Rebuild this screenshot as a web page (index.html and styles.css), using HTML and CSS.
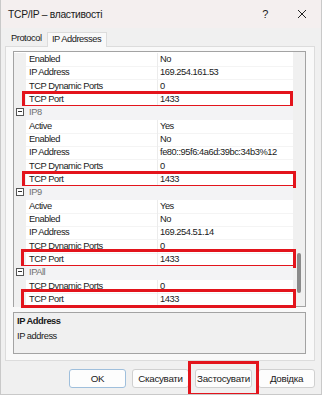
FILE: index.html
```html
<!DOCTYPE html>
<html lang="uk">
<head>
    <meta charset="UTF-8">
    <title>TCP/IP – властивості</title>
    <link rel="stylesheet" href="styles.css">
</head>
<body>
<div class="window">
    <div class="titlebar">
        <span class="title">TCP/IP – властивості</span>
        <span class="help">?</span>
        <svg class="close" width="10" height="10" viewBox="0 0 10 10"><path d="M1 1L9 9M9 1L1 9" stroke="#222" stroke-width="1"/></svg>
    </div>

    <!-- Tabs -->
    <div class="tabs">
        <div class="tab">Protocol</div>
        <div class="tab active">IP Addresses</div>
    </div>

    <div class="panel">
        <div class="grid">
            <div class="rows">
                <div class="row"><span></span><span class="name">Enabled</span><span class="val">No</span></div>
                <div class="row"><span></span><span class="name">IP Address</span><span class="val">169.254.161.53</span></div>
                <div class="row"><span></span><span class="name">TCP Dynamic Ports</span><span class="val">0</span></div>
                <div class="row hl"><span></span><span class="name">TCP Port</span><span class="val">1433</span></div>

                <div class="row cat"><span class="toggle"></span><span class="name">IP8</span></div>
                <div class="row"><span></span><span class="name">Active</span><span class="val">Yes</span></div>
                <div class="row"><span></span><span class="name">Enabled</span><span class="val">No</span></div>
                <div class="row"><span></span><span class="name">IP Address</span><span class="val">fe80::95f6:4a6d:39bc:34b3%12</span></div>
                <div class="row"><span></span><span class="name">TCP Dynamic Ports</span><span class="val">0</span></div>
                <div class="row hl wide"><span></span><span class="name">TCP Port</span><span class="val">1433</span></div>

                <div class="row cat"><span class="toggle"></span><span class="name">IP9</span></div>
                <div class="row"><span></span><span class="name">Active</span><span class="val">Yes</span></div>
                <div class="row"><span></span><span class="name">Enabled</span><span class="val">No</span></div>
                <div class="row"><span></span><span class="name">IP Address</span><span class="val">169.254.51.14</span></div>
                <div class="row"><span></span><span class="name">TCP Dynamic Ports</span><span class="val">0</span></div>
                <div class="row hl tall"><span></span><span class="name">TCP Port</span><span class="val">1433</span></div>

                <div class="row cat"><span class="toggle"></span><span class="name">IPAll</span></div>
                <div class="row"><span></span><span class="name">TCP Dynamic Ports</span><span class="val">0</span></div>
                <div class="row hl tall"><span></span><span class="name">TCP Port</span><span class="val">1433</span></div>
            </div>
            <div class="scroll"><div class="thumb"></div></div>
        </div>

        <div class="desc">
            <div class="desc-title">IP Address</div>
            <div class="desc-text">IP address</div>
        </div>
    </div>

    <div class="buttons">
        <button class="btn default">OK</button>
        <button class="btn">Скасувати</button>
        <span class="mark"><button class="btn">Застосувати</button></span>
        <button class="btn">Довідка</button>
    </div>
</div>
</body>
</html>
```

FILE: styles.css
```css
/* Base */
body {
    margin: 0;
    font-family: "Liberation Sans", Arial, sans-serif;
    font-size: 9.3px;
    letter-spacing: -0.45px;
    color: #1a1a1a;
}
.window {
    width: 322px;
    height: 395px;
    box-sizing: border-box;
    background-color: #f0f0f0;
    border: 1px solid #c9c9c9;
    border-top: none;
    overflow: hidden;
}

/* Title bar */
.titlebar {
    height: 28px;
    background-color: #f4efef;
    display: flex;
    align-items: center;
    padding-left: 7px;
}
.title {
    flex: 1;
    font-size: 10.3px;
    letter-spacing: -0.3px;
}
.help {
    font-size: 11px;
    margin-right: 29px;
}
.close {
    margin-right: 14px;
}

/* Tabs */
.tabs {
    display: flex;
    height: 18px;
    align-items: flex-end;
    padding-left: 5px;
}
.tab {
    height: 15px;
    line-height: 14px;
    padding: 0 5px;
}
.tab.active {
    box-sizing: border-box;
    width: 60px;
    text-align: center;
    background-color: #f9f9f9;
    border: 1px solid #dcdcdc;
    border-bottom: none;
    line-height: 12px;
    margin-bottom: -1px;
    position: relative;
    padding: 0;
}
.panel {
    box-sizing: border-box;
    margin: 0 6px 0 4px;
    height: 315px;
    background-color: #f9f9f9;
    border: 1px solid #dcdcdc;
    padding: 4px 8px 0 7px;
}

/* Property grid */
.grid {
    display: flex;
    height: 254px;
    border: 1px solid #a3a3a3;
    background-color: #ffffff;
}
.rows {
    flex: 1;
    padding-top: 1px;
}
.row {
    position: relative;
    display: grid;
    grid-template-columns: 12px 132px 1fr;
    height: 13.33px;
    line-height: 13px;
}
.row > span:first-child {
    background-color: #f0f0f0;
}
.row .name {
    padding-left: 3px;
    border-bottom: 1px solid #f4f4f4;
    border-right: 1px solid #ececec;
    white-space: nowrap;
}
.row .val {
    padding-left: 2px;
    border-bottom: 1px solid #f4f4f4;
    white-space: nowrap;
}
.row.cat {
    background-color: #f3f3f5;
    color: #707070;
}
.row.cat .name {
    border: none;
    grid-column: 2 / 4;
}
.toggle {
    position: relative;
}
.toggle::before {
    content: "";
    position: absolute;
    left: 2px;
    top: 2px;
    width: 6px;
    height: 6px;
    border: 1px solid #555555;
    background-color: #ffffff;
}
.toggle::after {
    content: "";
    position: absolute;
    left: 4px;
    top: 5px;
    width: 4px;
    height: 1px;
    background-color: #333333;
}

/* Red marks drawn over the rows */
.row.hl::after {
    content: "";
    position: absolute;
    top: -2px;
    bottom: -2px;
    left: 8px;
    right: 0;
    border: 3px solid #e3141c;
}
.row.wide::after {
    right: -3px;
}
.row.tall::after {
    top: -4px;
    left: 7px;
    right: -3px;
}

.scroll {
    width: 12px;
    background-color: #f0f0f0;
}
.thumb {
    width: 4px;
    height: 40px;
    margin: 201px 0 0 4px;
    border-radius: 2px;
    background-color: #8a8a8a;
}

/* Description */
.desc {
    box-sizing: border-box;
    margin-top: 5px;
    height: 42px;
    border: 1px solid #a3a3a3;
    background-color: #f0f0f0;
    padding: 2px 0 0 3px;
}
.desc-title {
    font-weight: bold;
    line-height: 13px;
}
.desc-text {
    margin-top: 2px;
    line-height: 12px;
}

/* Buttons */
.buttons {
    display: flex;
    justify-content: flex-end;
    align-items: center;
    gap: 6px;
    padding: 8px 6px 0 0;
}
.btn {
    font-family: inherit;
    font-size: 9.8px;
    letter-spacing: -0.3px;
    color: #1a1a1a;
    width: 57px;
    height: 19px;
    padding: 0;
    background-color: #fdfdfd;
    border: 1px solid #d0d0d0;
    border-radius: 3px;
}
.btn.default {
    border-color: #9fbfdc;
}
.mark {
    position: relative;
    display: flex;
}
.mark::after {
    content: "";
    position: absolute;
    top: -8px;
    bottom: -8px;
    left: -7px;
    right: -7px;
    border: 3px solid #e3141c;
}
```
